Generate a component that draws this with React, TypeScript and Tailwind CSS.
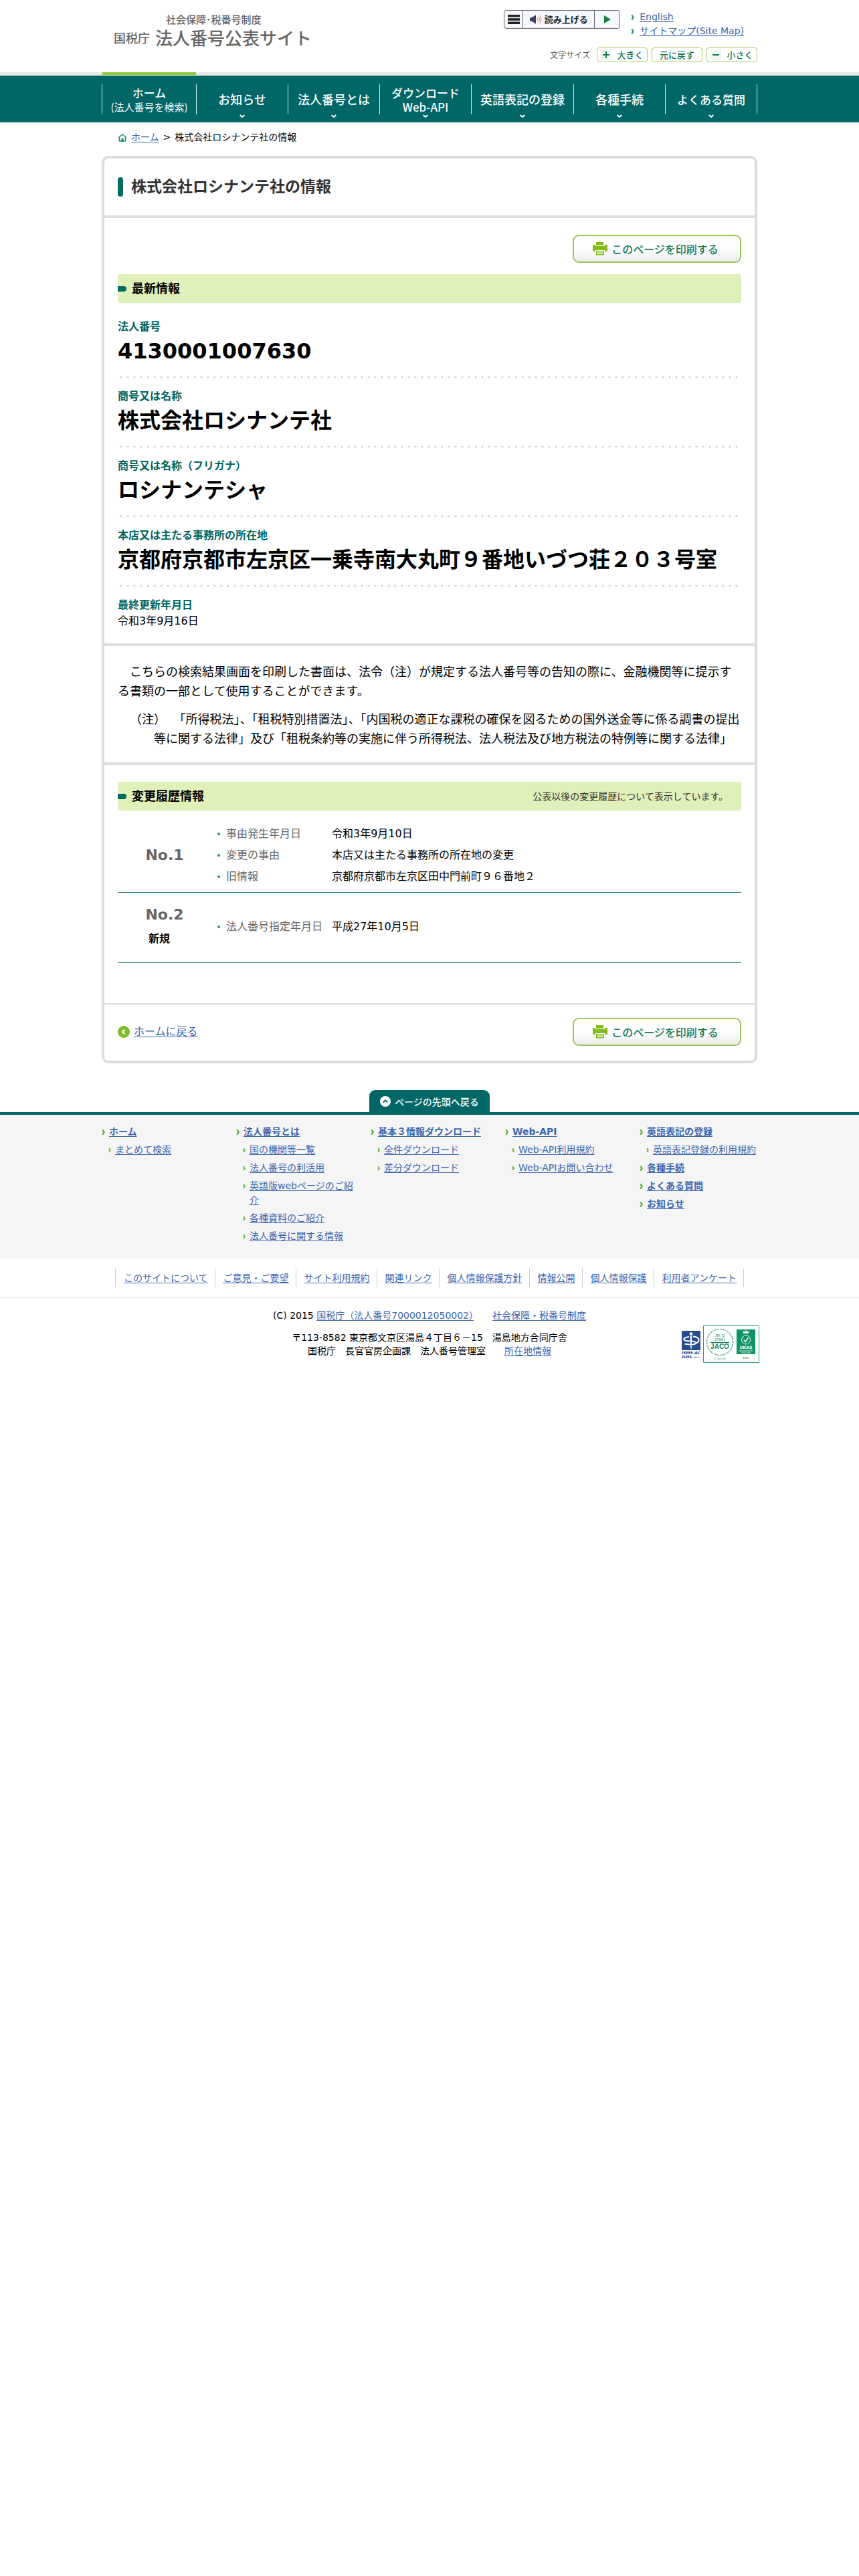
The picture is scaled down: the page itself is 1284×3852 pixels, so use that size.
import React from 'react';

interface NavItem {
  label: string[];
  sub?: string;
  size: string;
  grow: string;
  hasMenu?: boolean;
}

const NAV_ITEMS: NavItem[] = [
  { label: ['ホーム'], sub: '(法人番号を検索)', size: 'text-[17px]', grow: 'grow-[141]' },
  { label: ['お知らせ'], size: 'text-[18px]', grow: 'grow-[137]', hasMenu: true },
  { label: ['法人番号とは'], size: 'text-[18px]', grow: 'grow-[137]', hasMenu: true },
  { label: ['ダウンロード', 'Web-API'], size: 'text-[17px]', grow: 'grow-[137]', hasMenu: true },
  { label: ['英語表記の登録'], size: 'text-[18px]', grow: 'grow-[153]', hasMenu: true },
  { label: ['各種手続'], size: 'text-[18px]', grow: 'grow-[137]', hasMenu: true },
  { label: ['よくある質問'], size: 'text-[17px]', grow: 'grow-[137]', hasMenu: true },
];

const COMPANY_FIELDS = [
  { label: '法人番号', value: '4130001007630' },
  { label: '商号又は名称', value: '株式会社ロシナンテ社' },
  { label: '商号又は名称（フリガナ）', value: 'ロシナンテシャ' },
  {
    label: '本店又は主たる事務所の所在地',
    value: '京都府京都市左京区一乗寺南大丸町９番地いづつ荘２０３号室',
  },
];

const HISTORY = [
  {
    no: 'No.1',
    entries: [
      ['事由発生年月日', '令和3年9月10日'],
      ['変更の事由', '本店又は主たる事務所の所在地の変更'],
      ['旧情報', '京都府京都市左京区田中門前町９６番地２'],
    ],
  },
  {
    no: 'No.2',
    note: '新規',
    entries: [['法人番号指定年月日', '平成27年10月5日']],
  },
];

const FOOTER_COLUMNS = [
  [{ title: 'ホーム', links: ['まとめて検索'] }],
  [
    {
      title: '法人番号とは',
      links: [
        '国の機関等一覧',
        '法人番号の利活用',
        '英語版webページのご紹介',
        '各種資料のご紹介',
        '法人番号に関する情報',
      ],
    },
  ],
  [{ title: '基本３情報ダウンロード', links: ['全件ダウンロード', '差分ダウンロード'] }],
  [{ title: 'Web-API', links: ['Web-API利用規約', 'Web-APIお問い合わせ'] }],
  [
    { title: '英語表記の登録', links: ['英語表記登録の利用規約'] },
    { title: '各種手続', links: [] },
    { title: 'よくある質問', links: [] },
    { title: 'お知らせ', links: [] },
  ],
];

const POLICY_LINKS = [
  'このサイトについて',
  'ご意見・ご要望',
  'サイト利用規約',
  '関連リンク',
  '個人情報保護方針',
  '情報公開',
  '個人情報保護',
  '利用者アンケート',
];

const Link = ({ children, className = '' }: { children: React.ReactNode; className?: string }) => (
  <a href="#" className={`text-[#3a66b0] underline underline-offset-2 ${className}`}>
    {children}
  </a>
);

const Arrow = ({ className }: { className: string }) => (
  <svg viewBox="0 0 5 8" className={`shrink-0 ${className}`} aria-hidden="true">
    <path d="M0.5 0h2L5 4 2.5 8h-2L2 4z" fill="currentColor" />
  </svg>
);

const PrinterIcon = () => (
  <svg viewBox="0 0 22 20" className="h-5 w-[22px]" aria-hidden="true">
    <path d="M5 0h11v5H5z" fill="#84bd1a" />
    <path d="M0 4h4v2h14V4h4v10h-4v-2H4v2H0z" fill="#84bd1a" />
    <path d="M5 13h12v6.500H5z" fill="#84bd1a" />
    <path d="M6.500 14.800h9M6.500 17.400h9" stroke="#fff" strokeWidth="1.200" />
  </svg>
);

const PrintButton = () => (
  <button
    type="button"
    className="flex h-[42px] w-[252px] items-center justify-center gap-1.5 rounded-[9px] border-2 border-[#9cc45c] bg-gradient-to-b from-white from-40% to-[#ededed] pr-1 font-['Noto_Sans_CJK_JP',sans-serif] text-base leading-6 font-medium text-[#147a55]"
  >
    <PrinterIcon />
    このページを印刷する
  </button>
);

const SectionBar = ({ title, note }: { title: string; note?: string }) => (
  <div className="flex h-[43px] items-center justify-between rounded bg-[#dff0b8] pr-5">
    <div className="flex items-center gap-2">
      <span className="h-2 w-[13px] rounded-r-full bg-[#006a63]" />
      <h2 className="text-lg leading-7 font-bold text-black">{title}</h2>
    </div>
    {note && <p className="text-sm leading-5 text-[#333]">{note}</p>}
  </div>
);

const SpeechIcon = () => (
  <svg viewBox="0 0 18 14" className="h-3.5 w-[18px]" aria-hidden="true">
    <path d="M0 5l3-1 6-3.500v13L3 10 0 9z" fill="#3f3d63" />
    <path d="M11 4.500q2 2.500 0 5M13 2.500q3.200 4.500 0 9M15 1q4 6 0 12" fill="none" stroke="#e8896a" />
  </svg>
);

const SizeButton = ({ sign, children }: { sign?: string; children: React.ReactNode }) => (
  <button
    type="button"
    className="flex h-[22px] w-[76px] items-center justify-center gap-2 rounded-sm border border-[#a5cc62] bg-white text-[13px] leading-5 font-medium text-[#147a55]"
  >
    {sign && (
      <span className="flex h-4 w-4 items-center justify-center bg-[#f1f5f0]">
        <svg viewBox="0 0 10 10" className="h-2.5 w-2.5" aria-hidden="true">
          <path d={sign === '+' ? 'M0 5h10M5 0v10' : 'M0 5h10'} stroke="#147a55" strokeWidth="2" />
        </svg>
      </span>
    )}
    {children}
  </button>
);

const Header = () => (
  <header className="font-['Noto_Sans_CJK_JP',sans-serif]">
    <div className="mx-auto flex h-[108px] w-full max-w-[980px] justify-between">
      <a href="#" className="ml-[18px] pt-[18px] text-[#666]">
        <span className="block pl-[78px] text-[15px] leading-[22px] font-medium">社会保障･税番号制度</span>
        <span className="flex items-center gap-2 leading-8 font-medium">
          <span className="text-lg">国税庁</span>
          <span className="text-[26px]">法人番号公表サイト</span>
        </span>
      </a>
      <div className="flex flex-col items-end pt-[15px]">
        <div className="flex items-start gap-4 pr-5">
          <div className="flex h-7 divide-x divide-[#666] rounded-sm border border-[#666] bg-[#f4f8fc]">
            <button type="button" aria-label="メニュー" className="flex w-7 items-center justify-center">
              <svg viewBox="0 0 18 14" className="h-3.5 w-[18px]" aria-hidden="true">
                <path d="M0 1.800h18M0 7h18M0 12.200h18" stroke="#222" strokeWidth="3.400" />
              </svg>
            </button>
            <button
              type="button"
              className="flex w-[107px] items-center justify-center gap-1 text-[13px] leading-5 font-bold text-[#222]"
            >
              <SpeechIcon />
              読み上げる
            </button>
            <button type="button" aria-label="再生" className="flex w-[37px] items-center justify-center">
              <svg viewBox="0 0 10 12" className="h-3 w-2.5" aria-hidden="true">
                <path d="M0 0l10 6-10 6z" fill="#1c8041" />
              </svg>
            </button>
          </div>
          <ul className="font-['DejaVu_Sans','Noto_Sans_CJK_JP',sans-serif] text-sm leading-[21px]">
            {['English', 'サイトマップ(Site Map)'].map((label) => (
              <li key={label} className="flex items-center gap-2">
                <Arrow className="h-2 w-[5px] text-[#2fa678]" />
                <Link>{label}</Link>
              </li>
            ))}
          </ul>
        </div>
        <div className="mt-[14px] flex items-center gap-1.5">
          <span className="pr-1 text-xs leading-[22px] text-[#555]">文字サイズ</span>
          <SizeButton sign="+">大きく</SizeButton>
          <SizeButton>元に戻す</SizeButton>
          <SizeButton sign="-">小さく</SizeButton>
        </div>
      </div>
    </div>
    <div className="bg-[#e6eae3]">
      <div className="mx-auto h-1 w-full max-w-[980px]">
        <div className="ml-px h-1 w-[140px] bg-[#94c83d]" />
      </div>
    </div>
    <nav className="border-t border-[#e8fbf5] bg-[#006666]">
      <ul className="mx-auto flex h-[70px] w-full max-w-[980px] py-[13px] text-white">
        {NAV_ITEMS.map((item) => (
          <li
            key={item.label[0]}
            className={`relative h-[45px] basis-0 border-l border-[#c8f0ec] last:border-r ${item.grow}`}
          >
            <a href="#" className="flex h-full flex-col items-center justify-center whitespace-nowrap">
              {item.label.map((line) => (
                <span key={line} className={`leading-[21px] font-medium ${item.size}`}>
                  {line}
                </span>
              ))}
              {item.sub && <span className="text-[15px] leading-[21px]">{item.sub}</span>}
            </a>
            {item.hasMenu && (
              <svg
                viewBox="0 0 8 6"
                className="absolute top-[45px] left-1/2 h-1.5 w-2 -translate-x-1/2"
                aria-hidden="true"
              >
                <path d="M0.700 1L4 4 7.300 1" fill="none" stroke="#fff" strokeWidth="2" />
              </svg>
            )}
          </li>
        ))}
      </ul>
    </nav>
  </header>
);

const Breadcrumb = () => (
  <div className="mx-auto flex w-full max-w-[980px] items-center gap-1.5 px-6 pt-3 pb-[17px] text-sm leading-[21px] text-black">
    <svg viewBox="0 0 14 12" className="h-3 w-3.5" aria-hidden="true">
      <path d="M1 6l6-5 6 5M2.500 5.500V11h9V5.500" fill="none" stroke="#22936a" strokeWidth="1.600" />
      <path d="M5.300 7h3.400v5H5.300z" fill="#22936a" />
    </svg>
    <Link>ホーム</Link>
    <span>&gt;</span>
    <span>株式会社ロシナンテ社の情報</span>
  </div>
);

const CompanyDetail = () => (
  <main className="mx-auto w-full max-w-[980px] rounded-[10px] border-4 border-[#ddd]">
    <div className="flex items-start gap-3 border-b-4 border-[#ddd] px-5 pt-7 pb-7">
      <span className="h-[29px] w-2 rounded bg-[#006a63]" />
      <h1 className="text-[23px] leading-[29px] font-bold text-[#333]">株式会社ロシナンテ社の情報</h1>
    </div>

    <section className="border-b-4 border-[#ddd] px-5 pt-[25px] pb-[21px]">
      <div className="mb-[17px] flex justify-end">
        <PrintButton />
      </div>
      <SectionBar title="最新情報" />
      <dl className="pt-2.5">
        {COMPANY_FIELDS.map((field) => (
          <div
            key={field.label}
            className="h-[104px] bg-[radial-gradient(circle,#d4d4d4_1px,transparent_2px)] bg-[length:10px_6px] bg-left-bottom bg-repeat-x pt-[14px]"
          >
            <dt className="text-base leading-6 font-bold text-[#00665f]">{field.label}</dt>
            <dd className="text-[32px] leading-[48px] font-bold text-black">{field.value}</dd>
          </div>
        ))}
        <div className="pt-[14px]">
          <dt className="text-base leading-6 font-bold text-[#00665f]">最終更新年月日</dt>
          <dd className="text-base leading-6 text-black">令和3年9月16日</dd>
        </div>
      </dl>
    </section>

    <section className="border-b-4 border-[#ddd] px-5 pt-6 pb-[21px] text-lg leading-[29px] text-black">
      <p>
        {'\u3000'}
        こちらの検索結果画面を印刷した書面は、法令（注）が規定する法人番号等の告知の際に、金融機関等に提示する書類の一部として使用することができます。
      </p>
      <p className="mt-[13px] pl-[54px] indent-[-36px]">
        （注）&nbsp;&nbsp;「所得税法」、「租税特別措置法」、「内国税の適正な課税の確保を図るための国外送金等に係る調書の提出等に関する法律」及び「租税条約等の実施に伴う所得税法、法人税法及び地方税法の特例等に関する法律」
      </p>
    </section>

    <section className="border-b-2 border-[#ddd] px-5 pt-[25px] pb-[60px]">
      <SectionBar title="変更履歴情報" note="公表以後の変更履歴について表示しています。" />
      <div className="pt-[14px]">
        {HISTORY.map((row) => (
          <div key={row.no} className="flex min-h-[105px] items-center border-b border-[#2e8b6b] pt-[5px] pb-[7px]">
            <div className="w-[140px] text-center">
              <p className="text-[22px] leading-8 font-bold text-[#666]">{row.no}</p>
              {row.note && <p className="pt-1 pr-4 text-base leading-8 font-bold text-black">{row.note}</p>}
            </div>
            <dl className="flex-1 pl-[9px] text-base leading-8">
              {row.entries.map(([term, value]) => (
                <div key={term} className="flex items-center">
                  <span className="h-1 w-1 rounded-full bg-[#22936a]" />
                  <dt className="w-[167px] pl-[9px] text-[#666]">{term}</dt>
                  <dd className="text-black">{value}</dd>
                </div>
              ))}
            </dl>
          </div>
        ))}
      </div>
    </section>

    <div className="flex items-center justify-between px-5 pt-5 pb-[22px]">
      <div className="flex items-center gap-1.5">
        <svg viewBox="0 0 18 18" className="h-[18px] w-[18px]" aria-hidden="true">
          <circle cx="9" cy="9" r="9" fill="#7fba28" />
          <path d="M10.500 5.500L7 9l3.500 3.500" fill="none" stroke="#fff" strokeWidth="2" />
        </svg>
        <Link className="text-base leading-6">ホームに戻る</Link>
      </div>
      <PrintButton />
    </div>
  </main>
);

const IsmsLogo = () => (
  <svg viewBox="0 0 28 41" className="h-[41px] w-7" role="img" aria-label="ISMS-AC">
    <path d="M0 0h28v29H0z" fill="#274b8f" />
    <circle cx="14" cy="4.500" r="2.300" fill="#fff" />
    <path d="M12.700 7.500h2.600L14.600 27h-1.200z" fill="#fff" />
    <path
      d="M11 9C5 9.500 2.500 11.500 3.500 13.500 5.500 17 21 14 21.500 18c0 2.500-8 3.500-17 1.500M17 8.500c6 0 9 3 8.500 6-.5 2.500-3 4-6 4.500"
      fill="none"
      stroke="#fff"
      strokeWidth="2"
    />
    <text x="0" y="35" fontSize="6" fontWeight="700" fill="#274b8f">ISMS-AC</text>
    <text x="0" y="41" fontSize="5.500" fontWeight="700" fill="#274b8f">ISMS</text>
    <text x="17" y="41" fontSize="3" fill="#274b8f">ISR007</text>
  </svg>
);

const JacoLogo = () => (
  <svg viewBox="0 0 84 56" className="h-14 w-[84px]" role="img" aria-label="JIS Q 27001 JACO UKAS">
    <path d="M0.500 0.500h83v55H0.500z" fill="#fff" stroke="#2a9a72" />
    <circle cx="25" cy="25" r="19.500" fill="none" stroke="#4aa886" strokeWidth="1.600" strokeDasharray="1.500 0.900" />
    <text x="25" y="16.500" textAnchor="middle" fontSize="6.500" fontFamily="Liberation Serif" fill="#12855a">JIS Q</text>
    <text x="25" y="23" textAnchor="middle" fontSize="6.500" fontFamily="Liberation Serif" fill="#12855a">27001</text>
    <path d="M11 25.500h28" stroke="#12855a" strokeWidth="1.200" />
    <text x="25" y="35" textAnchor="middle" fontSize="10" fontWeight="700" fontFamily="Liberation Sans" fill="#12855a">JACO</text>
    <text x="25" y="51" textAnchor="middle" fontSize="3.500" fill="#4aa886">IC05J0080</text>
    <path d="M50 6h28v37H50z" fill="#0d9464" />
    <path d="M60.500 12l-1.500-3.500 3 1 2-2.500 2 2.500 3-1-1.500 3.500z" fill="#fff" />
    <circle cx="64" cy="21.500" r="6.500" fill="none" stroke="#fff" />
    <path d="M61 21.500l2.300 3 4-6" fill="none" stroke="#fff" strokeWidth="1.500" />
    <text x="64" y="35" textAnchor="middle" fontSize="6" fontWeight="700" fill="#fff">UKAS</text>
    <text x="64" y="38.500" textAnchor="middle" fontSize="3" fill="#fff">MANAGEMENT</text>
    <text x="64" y="42" textAnchor="middle" fontSize="3" fill="#fff">SYSTEMS</text>
    <text x="64" y="50" textAnchor="middle" fontSize="4" fill="#12855a">0054</text>
  </svg>
);

const Footer = () => (
  <footer className="text-sm text-black">
    <div className="flex justify-center border-b-4 border-[#006666] pt-10">
      <a
        href="#"
        className="flex h-[33px] w-[180px] items-center justify-center gap-1.5 rounded-t-[9px] bg-[#006666] font-['Noto_Sans_CJK_JP',sans-serif] leading-5 font-medium text-white"
      >
        <svg viewBox="0 0 16 16" className="h-4 w-4" aria-hidden="true">
          <circle cx="8" cy="8" r="8" fill="#fff" />
          <path d="M4.800 9.500L8 6.300l3.200 3.200" fill="none" stroke="#006666" strokeWidth="2" />
        </svg>
        ページの先頭へ戻る
      </a>
    </div>
    <div className="bg-[#f5f5f5]">
      <div className="mx-auto flex w-full max-w-[980px] justify-between pt-[15px] pb-[17px] leading-[21px]">
        {FOOTER_COLUMNS.map((groups) => (
          <ul key={groups[0].title} className="w-44">
            {groups.map((group) => (
              <li key={group.title}>
                <div className="mb-1.5 flex items-center gap-1.5">
                  <Arrow className="h-2 w-[5px] text-[#5bb030]" />
                  <Link className="font-bold whitespace-nowrap">{group.title}</Link>
                </div>
                {group.links.length > 0 && (
                  <ul className="pl-2.5">
                    {group.links.map((label) => (
                      <li key={label} className="mb-1.5 flex items-start gap-1.5">
                        <Arrow className="mt-2 h-1.5 w-1 text-[#5bb030]" />
                        <Link>{label}</Link>
                      </li>
                    ))}
                  </ul>
                )}
              </li>
            ))}
          </ul>
        ))}
      </div>
    </div>
    <div className="border-b border-[#e8e8e8]">
      <ul className="mx-auto flex w-full max-w-[980px] justify-center pt-[15px] pb-[15px]">
        {POLICY_LINKS.map((label) => (
          <li key={label} className="border-l border-[#ccc] pr-2.5 pl-3 leading-7 last:border-r">
            <Link>{label}</Link>
          </li>
        ))}
      </ul>
    </div>
    <div className="mx-auto w-full max-w-[980px] pt-4">
      <p className="text-center leading-5">
        (C) 2015 <Link>国税庁（法人番号7000012050002）</Link>
        {'\u3000\u3000'}
        <Link>社会保障・税番号制度</Link>
      </p>
      <div className="mt-[5px] grid grid-cols-[1fr_auto_1fr] items-center">
        <address className="col-start-2 text-center leading-5 not-italic">
          〒113-8582 東京都文京区湯島４丁目６－15　湯島地方合同庁舎
          <br />
          国税庁　長官官房企画課　法人番号管理室
          {'\u3000\u3000'}
          <Link>所在地情報</Link>
        </address>
        <div className="-mr-[3px] flex items-center gap-1 justify-self-end">
          <IsmsLogo />
          <JacoLogo />
        </div>
      </div>
    </div>
  </footer>
);

export default function App() {
  return (
    <div
      lang="ja"
      className="min-h-screen bg-white font-['DejaVu_Sans','Noto_Sans_CJK_JP',sans-serif] text-black"
    >
      <Header />
      <Breadcrumb />
      <CompanyDetail />
      <Footer />
    </div>
  );
}
